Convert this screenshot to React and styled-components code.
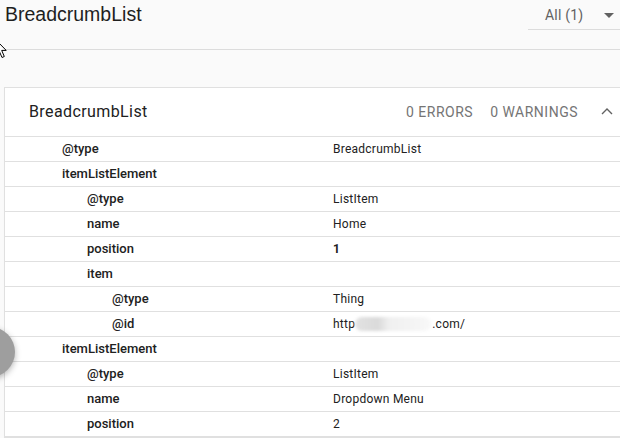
import React from "react";
import styled, { createGlobalStyle } from "styled-components";

const Global = createGlobalStyle`
  html, body { margin: 0; padding: 0; background: #fafafa; }
  body { font-family: Roboto, "Liberation Sans", Arial, sans-serif; color: #212121; overflow: hidden; }
  #root { width: 620px; height: 438px; overflow: hidden; position: relative; }
`;

const TopBar = styled.div`
  display: flex;
  justify-content: space-between;
  align-items: flex-start;
  height: 49px;
  border-bottom: 1px solid #dcdcdc;
`;

const PageTitle = styled.h1`
  margin: -1px 0 0 5px;
  font-family: "Liberation Sans", Arial, sans-serif;
  font-weight: 400;
  font-size: 19.5px;
  line-height: 30px;
  color: #1f1f1f;
`;

const Select = styled.div`
  display: flex;
  align-items: center;
  justify-content: space-between;
  width: 92px;
  height: 30px;
  box-sizing: border-box;
  padding: 0 6px 0 17px;
  border-bottom: 1px solid #dcdcdc;
  font-size: 14px;
  color: #616161;
  letter-spacing: 0.2px;
`;

const Caret = styled.span`
  width: 0;
  height: 0;
  border-left: 5px solid transparent;
  border-right: 5px solid transparent;
  border-top: 5px solid #616161;
  margin-top: 1px;
`;

const Card = styled.section`
  margin: 37px -20px 0 4px;
  background: #fff;
  border: 1px solid #e0e0e0;
  box-shadow: 0 1px 1px rgba(0,0,0,0.04);
`;

const CardHeader = styled.div`
  display: flex;
  align-items: center;
  height: 48px;
  padding-left: 24px;
  border-bottom: 1px solid #e0e0e0;
`;

const CardTitle = styled.div`
  flex: 1;
  font-size: 16px;
  letter-spacing: 0.4px;
  color: #212121;
  margin-top: -2px;
`;

const Count = styled.span`
  font-size: 14px;
  letter-spacing: 0.5px;
  color: #757575;
  margin-right: ${(p) => p.$gap}px;
`;

const Chevron = styled.svg`
  width: 12px;
  height: 8px;
  margin-right: 26px;
  margin-bottom: 3px;
`;

const Row = styled.div`
  display: flex;
  align-items: center;
  height: 24px;
  border-bottom: 1px solid #e0e0e0;
`;

const Key = styled.div`
  width: 328px;
  box-sizing: border-box;
  padding-left: ${(p) => 57 + p.$level * 25}px;
  font-size: 13px;
  font-weight: 500;
  color: #212121;
  margin-top: -1px;
`;

const Value = styled.div`
  font-size: 12px;
  letter-spacing: 0.25px;
  color: #212121;
  font-weight: ${(p) => (p.$bold ? 700 : 400)};
  display: flex;
  align-items: center;
  margin-top: -1px;
`;

const Blur = styled.span`
  display: inline-block;
  width: 76px;
  height: 14px;
  margin: 0 1px 0 0;
  border-radius: 7px;
  background: linear-gradient(90deg, #e2e2e2 0%, #dadada 30%, #f0f0f0 45%, #f3f3f3 70%, #f8f8f8 100%);
  filter: blur(1.5px);
`;

const Fab = styled.div`
  position: absolute;
  left: -35px;
  top: 327px;
  width: 50px;
  height: 50px;
  border-radius: 50%;
  background: #9e9e9e;
  box-shadow: 0 2px 6px rgba(0,0,0,0.3);
`;

const Cursor = styled.svg`
  position: absolute;
  left: -5px;
  top: 39px;
  width: 13px;
  height: 20px;
`;

const rows = [
  { k: "@type", l: 0, v: "BreadcrumbList" },
  { k: "itemListElement", l: 0, v: "" },
  { k: "@type", l: 1, v: "ListItem" },
  { k: "name", l: 1, v: "Home" },
  { k: "position", l: 1, v: "1", b: true },
  { k: "item", l: 1, v: "" },
  { k: "@type", l: 2, v: "Thing" },
  { k: "@id", l: 2, v: "url" },
  { k: "itemListElement", l: 0, v: "" },
  { k: "@type", l: 1, v: "ListItem" },
  { k: "name", l: 1, v: "Dropdown Menu" },
  { k: "position", l: 1, v: "2" },
];

export default function App() {
  return (
    <>
      <Global />
      <TopBar>
        <PageTitle>BreadcrumbList</PageTitle>
        <Select>
          <span>All (1)</span>
          <Caret />
        </Select>
      </TopBar>
      <Card>
        <CardHeader>
          <CardTitle>BreadcrumbList</CardTitle>
          <Count $gap={17}>0 ERRORS</Count>
          <Count $gap={23}>0 WARNINGS</Count>
          <Chevron viewBox="0 0 12 8">
            <path d="M1 7 L6 2 L11 7" fill="none" stroke="#616161" strokeWidth="1.4" />
          </Chevron>
        </CardHeader>
        {rows.map((r, i) => (
          <Row key={i}>
            <Key $level={r.l}>{r.k}</Key>
            <Value $bold={r.b}>
              {r.v === "url" ? (
                <>
                  http<Blur />.com/
                </>
              ) : (
                r.v
              )}
            </Value>
          </Row>
        ))}
      </Card>
      <Fab />
      <Cursor viewBox="0 0 13 20">
        <path d="M1 1 L1 15.5 L4.3 12.3 L7 18.5 L9.3 17.5 L6.7 11.4 L11.2 11.4 Z" fill="#fff" stroke="#000" strokeWidth="1" />
      </Cursor>
    </>
  );
}
